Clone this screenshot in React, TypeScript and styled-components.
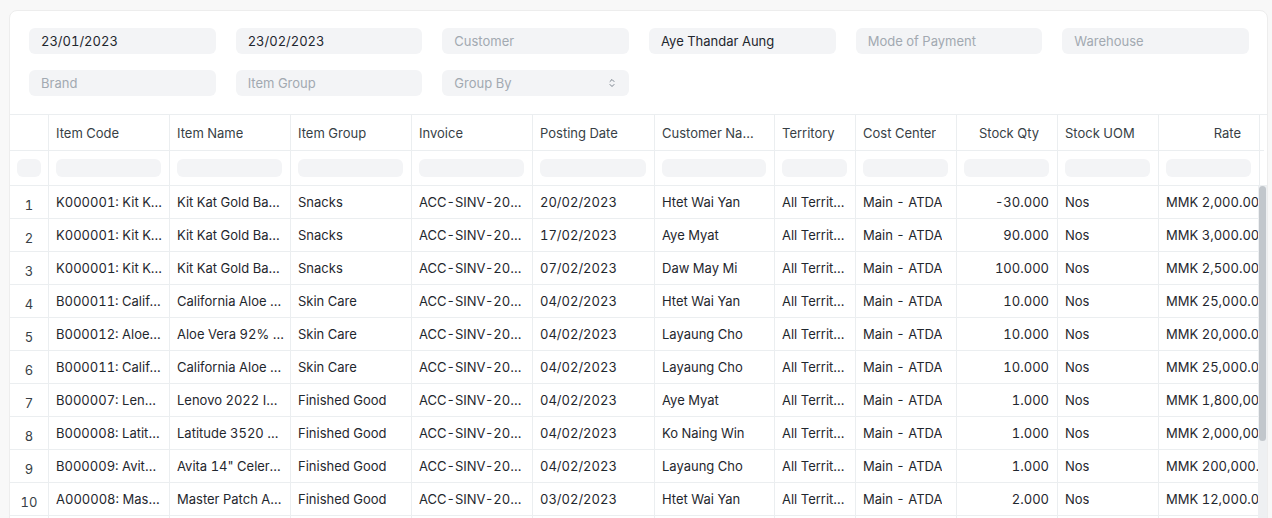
import styled, { createGlobalStyle } from "styled-components";

const GlobalStyle = createGlobalStyle`
  * {
    box-sizing: border-box;
  }
  body {
    margin: 0;
    background-color: #f8f8f8;
    font-family: Inter, "Noto Sans", sans-serif;
    font-size: 13px;
    font-variant-numeric: tabular-nums;
    color: #1f272e;
  }
`;

const Page = styled.div`
  padding: 10px 4px 0 9px;
`;

const Card = styled.div`
  background-color: #ffffff;
  border: 1px solid #ededed;
  border-radius: 8px;
  overflow: hidden;
`;

const Filters = styled.div`
  display: grid;
  grid-template-columns: repeat(6, 1fr);
  column-gap: 20px;
  row-gap: 16px;
  padding: 17px 18px 18px 19px;
`;

const Field = styled.div<{ $empty?: boolean }>`
  position: relative;
  height: 26px;
  display: flex;
  align-items: center;
  padding: 0 12px;
  border-radius: 6px;
  background-color: #f3f4f6;
  color: ${(p) => (p.$empty ? "#a2a9b1" : "#1f272e")};
  white-space: nowrap;
`;

const SelectCaret = styled.svg`
  position: absolute;
  right: 14px;
  top: 8px;
`;

const Table = styled.div`
  border-top: 1px solid #ebeef0;
`;

const columns = "39px 121px 121px 121px 121px 122px 120px 81px 101px 101px 101px 101px";

const Row = styled.div<{ $height: number }>`
  display: grid;
  grid-template-columns: ${columns};
  width: 1250px;
  height: ${(p) => p.$height}px;
`;

const HeadWrap = styled.div`
  width: 1254px;
  border-bottom: 1px solid #ebeef0;
`;

const HeadCell = styled.div<{ $right?: boolean }>`
  display: flex;
  align-items: center;
  justify-content: ${(p) => (p.$right ? "flex-end" : "flex-start")};
  padding: 0 18px 0 7px;
  border-right: 1px solid #ebeef0;
  color: #383f46;
  white-space: nowrap;
  overflow: hidden;
  min-width: 0;

  span {
    overflow: hidden;
    text-overflow: ellipsis;
  }
`;

const FilterCell = styled.div`
  display: flex;
  align-items: center;
  padding: 0 8px 0 7px;
  border-right: 1px solid #ebeef0;

  &:first-child {
    padding: 0 7px;
  }
`;

const FilterBox = styled.div`
  width: 100%;
  height: 18px;
  border-radius: 6px;
  background-color: #f3f4f6;
`;

const BodyFrame = styled.div`
  position: relative;
  border-top: 1px solid #ebeef0;
`;

const Body = styled.div`
  height: 400px;
  overflow: hidden;
`;

// custom vertical scroll bar laid over the right edge of the rows
const ScrollTrack = styled.div`
  position: absolute;
  top: 0;
  right: 0;
  bottom: 0;
  width: 9px;
  background-color: #eef0f2;
`;

const ScrollThumb = styled.div`
  margin: 0 1px;
  height: 255px;
  border-radius: 4px;
  background-color: #c2c7cc;
`;

const BodyRow = styled(Row)`
  border-bottom: 1px solid #ebeef0;
`;

const Cell = styled.div<{ $right?: boolean; $spill?: boolean }>`
  display: flex;
  align-items: center;
  padding: ${(p) => (p.$right ? "0 8px" : "0 6px 0 7px")};
  border-right: 1px solid #ebeef0;
  white-space: nowrap;
  min-width: 0;
  overflow: ${(p) => (p.$spill ? "visible" : "hidden")};
  justify-content: ${(p) => (p.$right ? "flex-end" : "flex-start")};
  color: #1f272e;

  span {
    overflow: ${(p) => (p.$spill ? "visible" : "hidden")};
    text-overflow: ellipsis;
  }
`;

const IndexCell = styled(Cell)`
  justify-content: center;
  padding: 6px 0 0;
  color: #383f46;
`;

const headers: { label: string; right?: boolean }[] = [
  { label: "Item Code" },
  { label: "Item Name" },
  { label: "Item Group" },
  { label: "Invoice" },
  { label: "Posting Date" },
  { label: "Customer Name" },
  { label: "Territory" },
  { label: "Cost Center" },
  { label: "Stock Qty", right: true },
  { label: "Stock UOM" },
  { label: "Rate", right: true },
];

type Sale = {
  code: string;
  name: string;
  group: string;
  invoice: string;
  date: string;
  customer: string;
  qty: string;
  rate: string;
};

const kitKat = {
  code: "K000001: Kit Kat Gold Bar",
  name: "Kit Kat Gold Bar 4 Finger",
  group: "Snacks",
};
const aloe = {
  code: "B000011: California Aloe Vera Gel",
  name: "California Aloe Vera Gel",
  group: "Skin Care",
};

const sales: Sale[] = [
  { ...kitKat, invoice: "ACC-SINV-2023-00021", date: "20/02/2023", customer: "Htet Wai Yan", qty: "-30.000", rate: "MMK 2,000.00" },
  { ...kitKat, invoice: "ACC-SINV-2023-00019", date: "17/02/2023", customer: "Aye Myat", qty: "90.000", rate: "MMK 3,000.00" },
  { ...kitKat, invoice: "ACC-SINV-2023-00017", date: "07/02/2023", customer: "Daw May Mi", qty: "100.000", rate: "MMK 2,500.00" },
  { ...aloe, invoice: "ACC-SINV-2023-00016", date: "04/02/2023", customer: "Htet Wai Yan", qty: "10.000", rate: "MMK 25,000.00" },
  { code: "B000012: Aloe Vera 92% Gel", name: "Aloe Vera 92% Soothing Gel", group: "Skin Care", invoice: "ACC-SINV-2023-00015", date: "04/02/2023", customer: "Layaung Cho", qty: "10.000", rate: "MMK 20,000.00" },
  { ...aloe, invoice: "ACC-SINV-2023-00015", date: "04/02/2023", customer: "Layaung Cho", qty: "10.000", rate: "MMK 25,000.00" },
  { code: "B000007: Lenovo 2022 IdeaPad", name: "Lenovo 2022 IdeaPad 3", group: "Finished Good", invoice: "ACC-SINV-2023-00014", date: "04/02/2023", customer: "Aye Myat", qty: "1.000", rate: "MMK 1,800,000.00" },
  { code: "B000008: Latitude 3520", name: "Latitude 3520 Laptop", group: "Finished Good", invoice: "ACC-SINV-2023-00013", date: "04/02/2023", customer: "Ko Naing Win", qty: "1.000", rate: "MMK 2,000,000.00" },
  { code: "B000009: Avita 14\" Celeron", name: "Avita 14\" Celeron Laptop", group: "Finished Good", invoice: "ACC-SINV-2023-00012", date: "04/02/2023", customer: "Layaung Cho", qty: "1.000", rate: "MMK 200,000.00" },
  { code: "A000008: Master Patch Acne", name: "Master Patch Acne Dots", group: "Finished Good", invoice: "ACC-SINV-2023-00011", date: "03/02/2023", customer: "Htet Wai Yan", qty: "2.000", rate: "MMK 12,000.00" },
  { ...kitKat, invoice: "ACC-SINV-2023-00010", date: "02/02/2023", customer: "Aye Myat", qty: "20.000", rate: "MMK 2,000.00" },
  { ...aloe, invoice: "ACC-SINV-2023-00009", date: "01/02/2023", customer: "Daw May Mi", qty: "5.000", rate: "MMK 25,000.00" },
  { code: "A000008: Master Patch Acne", name: "Master Patch Acne Dots", group: "Finished Good", invoice: "ACC-SINV-2023-00008", date: "31/01/2023", customer: "Ko Naing Win", qty: "3.000", rate: "MMK 12,000.00" },
  { ...kitKat, invoice: "ACC-SINV-2023-00007", date: "30/01/2023", customer: "Layaung Cho", qty: "50.000", rate: "MMK 2,000.00" },
  { code: "B000012: Aloe Vera 92% Gel", name: "Aloe Vera 92% Soothing Gel", group: "Skin Care", invoice: "ACC-SINV-2023-00006", date: "28/01/2023", customer: "Htet Wai Yan", qty: "4.000", rate: "MMK 20,000.00" },
  { code: "B000008: Latitude 3520", name: "Latitude 3520 Laptop", group: "Finished Good", invoice: "ACC-SINV-2023-00005", date: "27/01/2023", customer: "Aye Myat", qty: "1.000", rate: "MMK 2,000,000.00" },
  { ...kitKat, invoice: "ACC-SINV-2023-00004", date: "26/01/2023", customer: "Daw May Mi", qty: "40.000", rate: "MMK 2,500.00" },
  { ...aloe, invoice: "ACC-SINV-2023-00003", date: "25/01/2023", customer: "Layaung Cho", qty: "6.000", rate: "MMK 25,000.00" },
  { code: "B000009: Avita 14\" Celeron", name: "Avita 14\" Celeron Laptop", group: "Finished Good", invoice: "ACC-SINV-2023-00002", date: "24/01/2023", customer: "Ko Naing Win", qty: "1.000", rate: "MMK 200,000.00" },
];

function App() {
  return (
    <>
      <GlobalStyle />
      <Page>
        <Card>
          <Filters>
            <Field>23/01/2023</Field>
            <Field>23/02/2023</Field>
            <Field $empty>Customer</Field>
            <Field>Aye Thandar Aung</Field>
            <Field $empty>Mode of Payment</Field>
            <Field $empty>Warehouse</Field>
            <Field $empty>Brand</Field>
            <Field $empty>Item Group</Field>
            <Field $empty>
              Group By
              <SelectCaret width="6" height="10" viewBox="0 0 6 10" fill="none">
                <path d="M1 3.5L3 1.5L5 3.5" stroke="#6b7480" strokeWidth="0.9" strokeLinecap="round" strokeLinejoin="round" />
                <path d="M1 6.5L3 8.5L5 6.5" stroke="#6b7480" strokeWidth="0.9" strokeLinecap="round" strokeLinejoin="round" />
              </SelectCaret>
            </Field>
          </Filters>
          <Table>
            <HeadWrap>
              <Row $height={35}>
                <HeadCell />
                {headers.map((h) => (
                  <HeadCell key={h.label} $right={h.right}>
                    <span>{h.label}</span>
                  </HeadCell>
                ))}
              </Row>
            </HeadWrap>
            <Row $height={34}>
              <FilterCell>
                <FilterBox />
              </FilterCell>
              {headers.map((h) => (
                <FilterCell key={h.label}>
                  <FilterBox />
                </FilterCell>
              ))}
            </Row>
            <BodyFrame>
              <Body>
                {sales.map((s, i) => (
                  <BodyRow key={i} $height={33}>
                    <IndexCell>{i + 1}</IndexCell>
                    <Cell><span>{s.code}</span></Cell>
                    <Cell><span>{s.name}</span></Cell>
                    <Cell><span>{s.group}</span></Cell>
                    <Cell><span>{s.invoice}</span></Cell>
                    <Cell><span>{s.date}</span></Cell>
                    <Cell><span>{s.customer}</span></Cell>
                    <Cell><span>All Territories</span></Cell>
                    <Cell><span>Main - ATDA</span></Cell>
                    <Cell $right><span>{s.qty}</span></Cell>
                    <Cell><span>Nos</span></Cell>
                    <Cell $spill><span>{s.rate}</span></Cell>
                  </BodyRow>
                ))}
              </Body>
              <ScrollTrack>
                <ScrollThumb />
              </ScrollTrack>
            </BodyFrame>
          </Table>
        </Card>
      </Page>
    </>
  );
}

export default App;
